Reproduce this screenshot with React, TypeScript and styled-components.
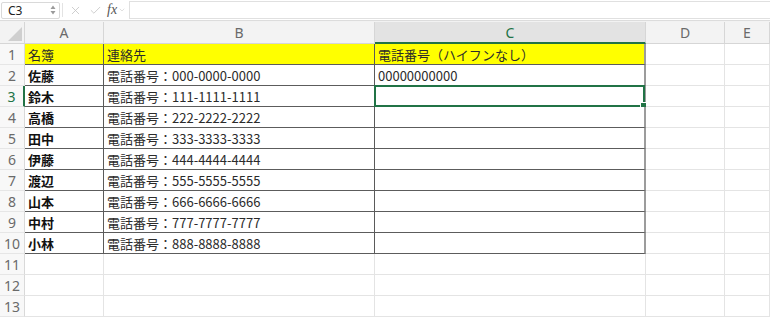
import styled, { createGlobalStyle } from "styled-components";
import { X, Check, ChevronDown } from "lucide-react";

const GlobalStyle = createGlobalStyle`
    body {
        margin:0;
        background:#ffffff;
        font-family:"Noto Sans CJK JP","Noto Sans",sans-serif;
    }
`;

const Page = styled.div`
    width:770px;
    height:317px;
    overflow:hidden;
    background:#ffffff;
`;

const FormulaBar = styled.div`
    display:flex;
    align-items:center;
    height:20px;
    background:#ffffff;
    border-bottom:1px solid #dcdcdc;
`;

const NameBox = styled.div`
    display:flex;
    align-items:center;
    justify-content:space-between;
    box-sizing:border-box;
    width:59px;
    height:17px;
    margin-left:1px;
    padding:0 3px 0 6px;
    border:1px solid #d9d9d9;
    border-radius:2px;
    font-family:"Noto Sans","Liberation Sans",sans-serif;
    font-size:12px;
    color:#222;
`;

const Spin = styled.svg`
    display:block;
`;

const Divider = styled.div`
    width:1px;
    height:14px;
    margin:0 6px 0 2px;
    background:#e3e3e3;
`;

const ToolIcon = styled.span<{ $gap?: number }>`
    display:flex;
    align-items:center;
    margin-right:${p => (p.$gap ?? 7)}px;
    color:#c4c4c4;
`;

const Fx = styled.span`
    font-family:"Liberation Serif",serif;
    font-style:italic;
    font-size:14px;
    color:#555;
    margin-right:1px;
`;

const FormulaInput = styled.div`
    flex:1;
    height:16px;
    margin-left:3px;
    border:1px solid #e0e0e0;
    border-right:none;
    background:#ffffff;
`;

const Gap = styled.div`
    height:1px;
    background:#f2f2f2;
`;

const Sheet = styled.div`
    display:grid;
    grid-template-columns:25px 79px 271px 271px 79px 1fr;
    grid-template-rows:22px;
    grid-auto-rows:21px;
`;

const Corner = styled.div`
    position:relative;
    background:#f3f3f3;
    border-right:1px solid #d6d6d6;
    border-bottom:1px solid #d6d6d6;
    box-sizing:border-box;
`;

const CornerMark = styled.svg`
    position:absolute;
    right:2px;
    bottom:2px;
`;

const ColHead = styled.div<{ $active?: boolean }>`
    box-sizing:border-box;
    display:flex;
    align-items:center;
    justify-content:center;
    font-family:"Noto Sans","Liberation Sans",sans-serif;
    font-size:14px;
    color:${p => (p.$active ? "#217346" : "#6a6a6a")};
    background:${p => (p.$active ? "#e3e3e3" : "#f3f3f3")};
    border-right:1px solid #d6d6d6;
    border-bottom:${p => (p.$active ? "2px solid #217346" : "1px solid #d6d6d6")};
`;

const RowHead = styled.div<{ $active?: boolean }>`
    box-sizing:border-box;
    display:flex;
    align-items:center;
    justify-content:center;
    font-family:"Noto Sans","Liberation Sans",sans-serif;
    font-size:14px;
    color:${p => (p.$active ? "#217346" : "#6a6a6a")};
    background:#f8f8f8;
    border-right:${p => (p.$active ? "2px solid #217346" : "1px solid #d9d9d9")};
    border-bottom:1px solid #e6e6e6;
`;

const Cell = styled.div<{ $framed?: boolean; $yellow?: boolean; $bold?: boolean; $edge?: boolean }>`
    position:relative;
    box-sizing:border-box;
    padding-left:3px;
    font-size:13px;
    line-height:22px;
    white-space:nowrap;
    overflow:visible;
    color:${p => (p.$bold ? "#111" : "#2b2b2b")};
    font-weight:${p => (p.$bold ? 700 : 400)};
    background:${p => (p.$yellow ? "#ffff00" : "#ffffff")};
    border-bottom:1px solid ${p => (p.$framed ? "#5c5c5c" : "#e4e4e4")};
    border-right:${p =>
        p.$edge ? "2px solid #9c9c9c" : p.$framed ? "1px solid #5a5a5a" : "1px solid #e4e4e4"};
`;

const Selection = styled.div`
    position:absolute;
    left:-1px;
    top:-1px;
    right:-1px;
    bottom:-1px;
    border:2px solid #217346;
    pointer-events:none;
`;

const Handle = styled.div`
    position:absolute;
    right:-4px;
    bottom:-4px;
    width:5px;
    height:5px;
    background:#217346;
    border:1px solid #ffffff;
`;

const names = ["佐藤", "鈴木", "高橋", "田中", "伊藤", "渡辺", "山本", "中村", "小林"];
const digits = ["0", "1", "2", "3", "4", "5", "6", "7", "8"];
const cols = ["A", "B", "C", "D", "E"];

function phone(d: string) {
    return `電話番号：${d.repeat(3)}-${d.repeat(4)}-${d.repeat(4)}`;
}

function App() {
    const rows: string[][] = [["名簿", "連絡先", "電話番号（ハイフンなし）"]];
    names.forEach((n, i) => {
        rows.push([n, phone(digits[i]), i === 0 ? "00000000000" : ""]);
    });
    for (let i = 0; i < 3; i++) rows.push(["", "", ""]);

    return (
        <Page>
            <GlobalStyle />
            <FormulaBar>
                <NameBox>
                    <span>C3</span>
                    <Spin width="6" height="10" viewBox="0 0 6 10">
                        <path d="M3 0.5 L5.5 4 H0.5 Z" fill="#9a9a9a" />
                        <path d="M3 9.5 L5.5 6 H0.5 Z" fill="#9a9a9a" />
                    </Spin>
                </NameBox>
                <Divider />
                <ToolIcon>
                    <X size={13} strokeWidth={1.5} />
                </ToolIcon>
                <ToolIcon $gap={5}>
                    <Check size={13} strokeWidth={1.5} />
                </ToolIcon>
                <Fx>fx</Fx>
                <ToolIcon $gap={0}>
                    <ChevronDown size={8} strokeWidth={1.6} />
                </ToolIcon>
                <FormulaInput />
            </FormulaBar>
            <Gap />
            <Sheet>
                <Corner>
                    <CornerMark width="14" height="14" viewBox="0 0 14 14">
                        <path d="M14 0 V14 H0 Z" fill="#cfcfcf" />
                    </CornerMark>
                </Corner>
                {cols.map(c => (
                    <ColHead key={c} $active={c === "C"}>{c}</ColHead>
                ))}
                {rows.map((r, i) => {
                    const rowNo = i + 1;
                    const framed = rowNo <= 10;
                    return [
                        <RowHead key={`h${rowNo}`} $active={rowNo === 3}>{rowNo}</RowHead>,
                        <Cell key={`a${rowNo}`} $framed={framed} $yellow={rowNo === 1} $bold={framed && rowNo > 1}>
                            {r[0]}
                        </Cell>,
                        <Cell key={`b${rowNo}`} $framed={framed} $yellow={rowNo === 1}>
                            {r[1]}
                        </Cell>,
                        <Cell key={`c${rowNo}`} $framed={framed} $edge={framed} $yellow={rowNo === 1}>
                            {r[2]}
                            {rowNo === 3 ? (
                                <Selection>
                                    <Handle />
                                </Selection>
                            ) : null}
                        </Cell>,
                        <Cell key={`d${rowNo}`} />,
                        <Cell key={`e${rowNo}`} />,
                    ];
                })}
            </Sheet>
        </Page>
    );
}

export default App;
